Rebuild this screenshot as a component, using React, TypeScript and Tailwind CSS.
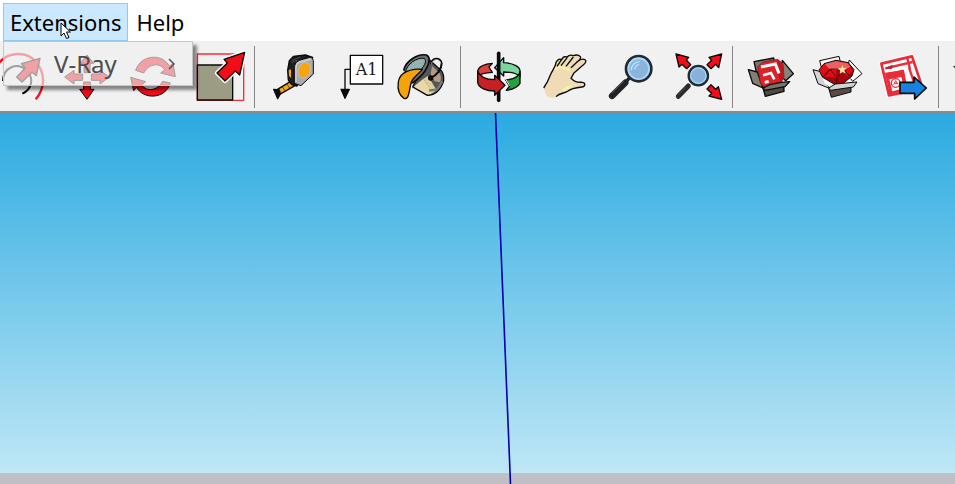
import { useState } from 'react';
import type { ReactNode } from 'react';

interface ToolProps {
  label: string;
  viewBox: string;
  narrow?: boolean;
  children: ReactNode;
}

const Tool = ({ label, viewBox, narrow, children }: ToolProps) => (
  <button type="button" aria-label={label} className="shrink-0">
    <svg
      viewBox={viewBox}
      className={narrow ? 'block h-[70px] w-[55px]' : 'block h-[70px] w-[66px]'}
      fill="none"
      stroke="#0a0a0a"
      strokeWidth="4"
      strokeLinejoin="round"
    >
      {children}
    </svg>
  </button>
);

const Separator = () => <div className="mt-[5px] mr-[6px] ml-px h-[62px] w-px shrink-0 bg-[#858585]" />;

const OffsetIcon = () => (
  <>
    <path d="M-4 190C22 156 80 150 110 188C138 224 134 266 107 298" stroke="#f5101e" strokeWidth="7" />
    <path d="M9 243C10 200 52 187 79 210C104 236 95 268 67 281" strokeWidth="6" />
    <path d="M50 231L76 204L64 191L120 175L109 227L96 217L66 246Z" fill="#f20d19" />
  </>
);

const MoveIcon = () => (
  <g fill="#f20d19" strokeWidth="3">
    <path d="M261 165L281 190H270V218H252V190H241Z" />
    <path d="M194 231L222 211V222H248V241H222V252Z" />
    <path d="M328 231L300 211V222H274V241H300V252Z" />
    <path d="M261 298L282 268H271V246H251V268H239Z" />
  </g>
);

const RotateIcon = () => (
  <g fill="#f20d19" strokeWidth="3">
    <path d="M407 211C421 164 488 158 508 199L519 190L526 230L482 219L494 209C479 187 447 190 431 219Z" />
    <path d="M511 249C497 298 430 300 410 262L401 272L392 232L437 245L425 255C440 276 472 273 488 244Z" />
  </g>
);

const ScaleIcon = () => (
  <>
    <path d="M37 42H176V181H37Z" stroke="#fb2c3c" strokeWidth="4" />
    <path d="M37 75H143V180H37Z" fill="#9c9b84" />
    <path d="M179 37L117 58L127 69L96 99L120 123L151 93L164 105Z" fill="#f20d19" stroke="#fff" strokeWidth="13" />
    <path d="M179 37L117 58L127 69L96 99L120 123L151 93L164 105Z" fill="#f20d19" />
  </>
);

const TapeIcon = () => (
  <>
    <path d="M36 131L76 107L90 119L44 145Z" fill="#f5a914" />
    <path d="M52 123L60 134M66 115L74 126" strokeWidth="2" />
    <path d="M26 130L43 132L46 144L38 158Z" fill="#0a0a0a" />
    <path d="M68 72L73 44L85 31L121 27L143 34L96 120L80 116L70 102Z" fill="#1d1d1f" />
    <path d="M71 72L78 70V96L72 90Z" fill="#f5a914" stroke="none" />
    <path d="M80 44L106 33M79 50L97 42" stroke="#5f6468" strokeWidth="2" />
    <path d="M88 62Q90 48 102 43L134 34Q144 34 145 44V84L108 119L88 112Z" fill="#a9abb0" strokeWidth="3" />
    <path d="M93 108V65Q94 52 105 48L139 39" stroke="#cfd0d5" strokeWidth="4" />
    <ellipse cx="118" cy="73" rx="18" ry="24" transform="rotate(20 118 73)" fill="#f6a60c" stroke="#c4c6cd" strokeWidth="2" />
  </>
);

const TextIcon = () => (
  <>
    <path d="M76 46H173V132H76Z" fill="#fff" />
    <text x="92" y="104" fontSize="48" fill="#171717" stroke="none" className="font-['DejaVu_Serif',serif]">A1</text>
    <path d="M76 88H60V149" />
    <path d="M48 148H73L60 175Z" fill="#0a0a0a" />
  </>
);

const PaintIcon = () => (
  <>
    {/* pail */}
    <path d="M104 34L148 74Q156 84 155 104Q150 124 134 139Q120 150 106 148L62 123Z" fill="#55565a" />
    <path d="M70 118L94 98L122 140Q114 147 105 145L66 122Z" fill="#e8d8a8" stroke="none" />
    <path d="M94 98L108 90L134 133L122 141Z" fill="#e0cd9c" stroke="none" />
    <path d="M120 60L144 83Q149 98 144 109L128 106L116 84Z" fill="#b59b80" stroke="none" />
    <path d="M111 134L136 130L151 106" stroke="#77787c" strokeWidth="7" />
    {/* rim */}
    <path d="M35 74C40 46 76 22 103 27C122 35 106 73 82 94C70 106 60 114 54 110" fill="#6d6e72" stroke="#0a0a0a" strokeWidth="5" />
    <path d="M40 78C46 53 74 34 96 37C108 43 94 67 80 76L58 90Z" fill="#8fb0ac" strokeWidth="3" />
    <path d="M52 70C62 52 78 45 92 46M60 74C68 62 78 57 88 57" stroke="#b8cbe0" strokeWidth="2" strokeDasharray="3 3" />
    {/* paint */}
    <path d="M33 83C46 74 68 68 91 70C80 84 64 93 58 108C53 123 53 142 47 153Q42 160 36 157C22 148 16 130 19 108Q22 91 33 83Z" fill="#f5a20b" />
    <path d="M117 56C119 33 146 33 149 52C149 70 134 88 117 95" strokeWidth="6" />
    <path d="M118 56C121 37 143 36 146 52" stroke="#e6e6e6" strokeWidth="2" />
    <circle cx="116" cy="96" r="6" fill="#111" />
  </>
);

const OrbitIcon = () => (
  <>
    <path d="M68 95C69 80 89 71 112 70L102 81L112 97C89 98 76 101 69 109Z" fill="#d9423a" />
    <path d="M146 53V68C174 69 195 80 195 93V111C188 101 171 96 146 96V108L119 83Z" fill="#7bd5a0" />
    <path d="M195 95V130C188 142 173 148 154 151L164 138L151 120C176 118 193 109 195 95Z" fill="#21a141" />
    <path d="M131 40V181" strokeWidth="11" strokeLinecap="round" />
    <path d="M68 94C75 112 96 119 119 119V106L150 136L119 166V153C94 153 71 144 68 127Z" fill="#c82027" />
    <path d="M116 78L107 83L119 98M142 117L154 126M151 116L164 137" stroke="#fff" strokeWidth="3" />
  </>
);

const HandIcon = () => (
  <>
    <path
      d="M266 144C277 129 282 117 287 103C293 89 303 78 303 67Q311 53 320 59Q325 47 336 51Q345 42 355 47Q369 42 376 50Q380 55 367 65Q382 53 391 60Q397 66 381 78L356 100L348 115C360 127 367 126 382 127C393 129 391 140 380 141C361 143 347 146 338 154C329 161 315 157 303 170L291 174L275 169Z"
      fill="#efdcb7"
      stroke="none"
    />
    <path d="M298 86L315 81L330 85L345 91M323 150L349 138" stroke="#fcf2a7" strokeWidth="8" strokeDasharray="10 2" />
    <path
      d="M266 144C277 129 282 117 287 103C293 89 303 78 303 67Q311 53 320 59Q325 47 336 51Q345 42 355 47Q369 42 376 50Q380 55 367 65Q382 53 391 60Q397 66 381 78L356 100L348 115C360 127 367 126 382 127C393 129 391 140 380 141C361 143 347 146 338 154C329 161 315 157 303 170"
      strokeWidth="4"
    />
    <path d="M320 58L306 79M337 52L318 77M355 51L333 79M367 65L348 83" strokeWidth="4" />
  </>
);

const ZoomIcon = () => (
  <>
    <path d="M91 128L51 168" stroke="#202225" strokeWidth="19" strokeLinecap="round" />
    <path d="M87 123L50 160" stroke="#53565a" strokeWidth="3" />
    <path d="M94 124L104 113" stroke="#222" strokeWidth="10" />
    <circle cx="131" cy="86" r="38" fill="#8bb4dc" stroke="#202b30" strokeWidth="8" />
    <circle cx="131" cy="86" r="31" stroke="#abd8f9" strokeWidth="5" />
    <path d="M109 91C108 76 119 66 134 65M119 88Q121 76 132 73" stroke="#b8e3fa" strokeWidth="4" />
  </>
);

const ExtentsIcon = () => (
  <>
    <path d="M280 138L250 169" stroke="#292d30" strokeWidth="15" strokeLinecap="round" />
    <path d="M274 140L249 165" stroke="#57595b" strokeWidth="2" />
    <circle cx="310" cy="107" r="29" fill="#89b0da" stroke="#202b30" strokeWidth="7" />
    <circle cx="310" cy="107" r="23" stroke="#9cd1f5" strokeWidth="4" />
    <g fill="#f20d19">
      <path d="M243 42L281 52L274 60L287 74L275 86L261 73L252 81Z" />
      <path d="M380 42L342 52L350 61L336 74L348 86L362 73L371 83Z" />
      <path d="M380 178L370 140L362 148L348 134L336 147L350 160L342 168Z" />
    </g>
  </>
);

const WarehouseIcon = () => (
  <>
    <path d="M27 47L86 36L92 60L38 96Z" fill="#77766b" />
    <path d="M112 43L145 83L122 104L108 90Z" fill="#85837a" />
    <path d="M10 71L37 78L54 126L23 112Z" fill="#827f75" />
    <path d="M38 62L54 48L98 40L114 53L117 94L108 110L58 124L46 112Z" fill="#dc2228" stroke="#7a1013" strokeWidth="2" />
    <path d="M98 42L114 53L117 94L108 110L92 70Z" fill="#bb1a22" stroke="none" />
    <path d="M48 63L91 54L102 82" stroke="#fff" strokeWidth="9" strokeLinejoin="miter" />
    <path d="M54 88L78 81L88 100" stroke="#fff" strokeWidth="8" strokeLinejoin="miter" />
    <path d="M59 109L71 106" stroke="#fff" strokeWidth="9" />
    <path d="M54 126L116 115L117 136L61 151Z" fill="#4e4942" />
    <path d="M54 126L75 116L108 109L134 107L120 122L60 133Z" fill="#77746b" />
  </>
);

const GemIcon = () => (
  <>
    <path d="M29 44L87 31L94 60L38 80Z" fill="#f4f4f4" strokeWidth="3" />
    <path d="M118 42L156 83L128 106L108 80Z" fill="#fff" strokeWidth="3" />
    <path d="M9 71L32 77L58 127L24 113Z" fill="#d3d3d3" strokeWidth="3" />
    <path d="M34 88L126 84L118 108L60 124L44 112Z" fill="#fff" stroke="none" />
    <path d="M56 126L123 112V138L64 154Z" fill="#5a4a44" strokeWidth="3" />
    {/* ruby */}
    <path d="M27 72L42 53L78 43L115 50L132 71L126 90L98 114H72L38 94Z" fill="#a5060d" strokeWidth="3" />
    <path d="M44 54L78 45L113 52L122 64L102 72L58 70Z" fill="#ec6062" stroke="none" />
    <path d="M28 73L42 55L58 70L40 92Z" fill="#e50b14" stroke="none" />
    <path d="M60 71L78 72V94L44 94Z" fill="#e50b14" stroke="none" />
    <path d="M102 72L120 64L130 72L112 92Z" fill="#e50b14" stroke="none" />
    <path d="M40 92L60 69L80 95L102 70L118 90M80 95V112M60 69H102" strokeWidth="2" />
    <path d="M97 56L100 66L110 65L103 73L107 83L98 78L89 84L91 74L84 66L94 67Z" fill="#ffeaa6" stroke="none" />
    <path d="M56 126L76 114L141 108L130 123L62 133Z" fill="#d3d3d3" strokeWidth="3" />
  </>
);

const LayoutIcon = () => (
  <>
    <path d="M46 70L143 46L179 145L69 170Z" fill="#fff" stroke="#fff" strokeWidth="8" />
    <path d="M49 71L141 49L173 145L72 166Z" fill="#fff" stroke="#e92d38" strokeWidth="8" />
    <path d="M61 85L143 66M127 54L135 87M62 104L114 93L120 128M132 82L151 139" stroke="#e92d38" strokeWidth="7" />
    <path d="M60 98L114 91L130 152L74 164Z" fill="#e92d38" stroke="none" />
    <path d="M73 118L109 111L117 145L82 154Z" fill="#fff" stroke="none" />
    <circle cx="92" cy="129" r="13" stroke="#e92d38" strokeWidth="4" />
    <path d="M86 134L92 122L99 133M88 130H97" stroke="#e92d38" strokeWidth="3" />
    <path d="M62 85L82 76L80 86Z" fill="#c71b27" stroke="#c71b27" strokeWidth="2" />
    <path d="M105 127H147V111L184 144L149 177V160H105Z" fill="#1683df" strokeWidth="5" />
  </>
);

const App = () => {
  const [open, setOpen] = useState(true);

  return (
    <div className="flex min-h-screen flex-col overflow-hidden bg-white font-['Noto_Sans',sans-serif] text-black">
      <nav className="relative flex h-[41px] shrink-0 items-start pt-[3px] pl-[3px]" aria-label="Main menu">
        <button
          type="button"
          aria-expanded={open}
          onClick={() => setOpen(!open)}
          className="h-[38px] border border-[#91c9f0] bg-[#cce8ff] px-1.5 text-[22px] leading-9"
        >
          Extensions
        </button>
        <button type="button" className="h-[38px] px-2 text-[22px] leading-[38px]">Help</button>

        {open && (
          <div className="absolute top-[41px] left-[3px] z-10 w-[190px] border border-[#c6c6c6] bg-[#f0f0f0]/65 shadow-[4px_4px_3px_rgba(0,0,0,0.45)]">
            <button type="button" className="flex h-[43px] w-full items-center justify-between pr-4 pl-[50px] text-2xl text-[#4c4c4c]">
              V-Ray
              <svg viewBox="0 0 8 12" className="h-3 w-2" fill="none" stroke="#555" strokeWidth="1.5">
                <path d="M1 1L6 6L1 11" />
              </svg>
            </button>
          </div>
        )}

        {/* pointer */}
        <svg viewBox="0 0 12 18" className="pointer-events-none absolute top-[22px] left-[60px] z-20 h-[18px] w-3" fill="#fff" stroke="#000">
          <path d="M1 1V14L4 11L6.5 16.5L9 15.5L6.5 10H10.5Z" />
        </svg>
      </nav>

      <div role="toolbar" aria-label="Tools" className="flex h-[72px] shrink-0 overflow-hidden border-b-2 border-[#8a8a8a] bg-[#f1f1f1]">
        <Tool label="Offset" viewBox="0 123 165 210" narrow><OffsetIcon /></Tool>
        <Tool label="Move" viewBox="165 123 198 210"><MoveIcon /></Tool>
        <Tool label="Rotate" viewBox="363 123 198 210"><RotateIcon /></Tool>
        <Tool label="Scale" viewBox="6 3 198 210"><ScaleIcon /></Tool>
        <Separator />
        <Tool label="Tape measure" viewBox="-12 -15 198 210"><TapeIcon /></Tool>
        <Tool label="Text" viewBox="6 3 198 210"><TextIcon /></Tool>
        <Tool label="Paint bucket" viewBox="3 -15 198 210"><PaintIcon /></Tool>
        <Separator />
        <Tool label="Orbit" viewBox="36 3 198 210"><OrbitIcon /></Tool>
        <Tool label="Pan" viewBox="234 3 198 210"><HandIcon /></Tool>
        <Tool label="Zoom" viewBox="12 3 198 210"><ZoomIcon /></Tool>
        <Tool label="Zoom extents" viewBox="210 3 198 210"><ExtentsIcon /></Tool>
        <Separator />
        <Tool label="3D Warehouse" viewBox="-18 -15 198 210"><WarehouseIcon /></Tool>
        <Tool label="Extension Warehouse" viewBox="-15 -15 198 210"><GemIcon /></Tool>
        <Tool label="Send to LayOut" viewBox="18 3 198 210"><LayoutIcon /></Tool>
        <Separator />
        <button type="button" aria-label="More tools" className="ml-2 shrink-0 pb-4">
          <svg viewBox="0 0 9 5" className="block h-[5px] w-[9px]" fill="#222">
            <path d="M0 0H9L4.5 5Z" />
          </svg>
        </button>
      </div>

      <main className="relative flex flex-1 flex-col">
        <div className="flex-1 bg-linear-to-b/srgb from-[#2aaae0] to-[#bfe7f6]" />
        <div className="h-[11px] border-t border-[#b5c5cc] bg-[#c0bfc5]" />
        {/* blue axis */}
        <svg viewBox="0 0 955 371" preserveAspectRatio="none" className="absolute inset-0 h-full w-full" stroke="#0000ae" strokeWidth="1.6">
          <path d="M495.5 0L510.5 371" />
        </svg>
      </main>
    </div>
  );
};

export default App;
